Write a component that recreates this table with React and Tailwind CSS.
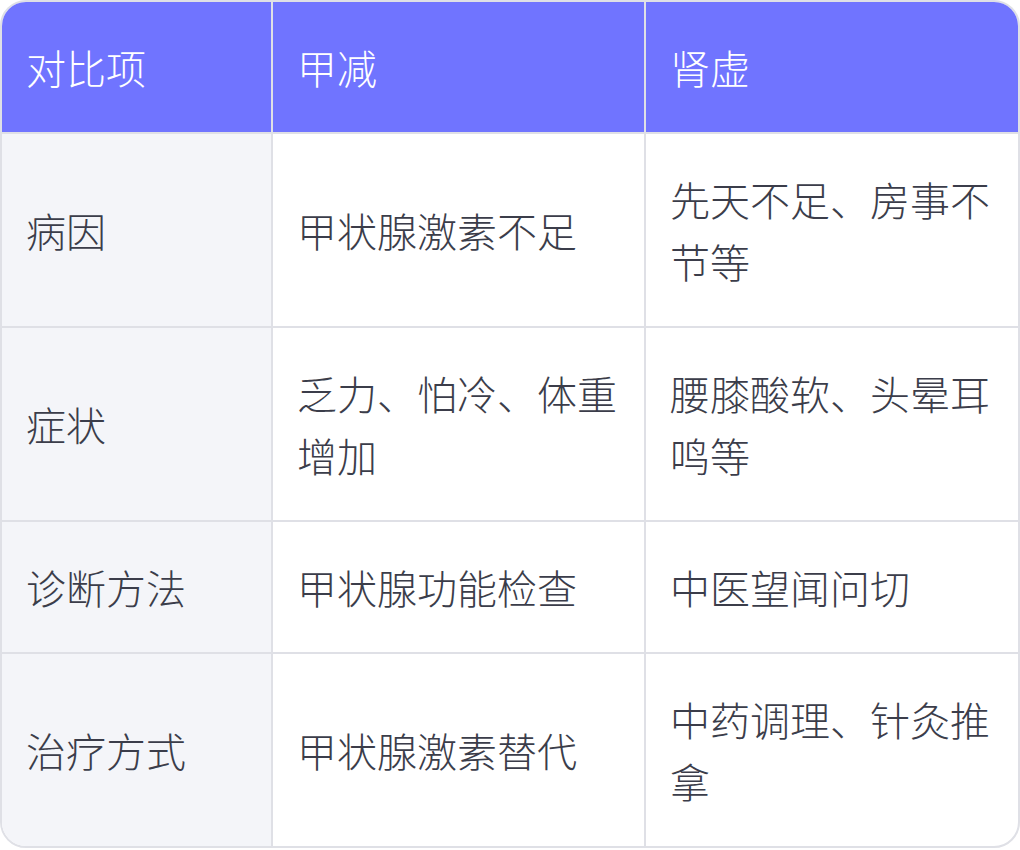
import React from 'react';

const rows = [
  { label: '病因', a: '甲状腺激素不足', b: '先天不足、房事不节等' },
  { label: '症状', a: '乏力、怕冷、体重增加', b: '腰膝酸软、头晕耳鸣等' },
  { label: '诊断方法', a: '甲状腺功能检查', b: '中医望闻问切' },
  { label: '治疗方式', a: '甲状腺激素替代', b: '中药调理、针灸推拿' },
];

const font = { fontFamily: '"Noto Sans CJK SC", "Noto Sans", sans-serif' };

export default function App() {
  return (
    <div className="w-[1020px] h-[850px] bg-white" style={font}>
      <div className="border-2 border-[#dfe0e6] rounded-[26px] overflow-hidden">
        <div className="grid grid-cols-[271px_373px_1fr] text-[40px] leading-[62px] font-light text-[#3b3d4a]">
          {/* header */}
          <div className="bg-[#7074ff] text-white px-6 py-[34px] border-r-2 border-b-2 border-[#dfe0e6]">对比项</div>
          <div className="bg-[#7074ff] text-white px-6 py-[34px] border-r-2 border-b-2 border-[#dfe0e6]">甲减</div>
          <div className="bg-[#7074ff] text-white px-6 py-[34px] border-b-2 border-[#dfe0e6]">肾虚</div>

          {rows.map((r, i) => {
            const last = i === rows.length - 1;
            return (
              <React.Fragment key={r.label}>
                <div className={`bg-[#f4f5f9] px-6 py-[34px] border-r-2 border-[#dfe0e6] flex items-center ${last ? '' : 'border-b-2'}`}>
                  {r.label}
                </div>
                <div className={`px-6 py-[34px] border-r-2 border-[#dfe0e6] flex items-center ${last ? '' : 'border-b-2'}`}>
                  {r.a}
                </div>
                <div className={`px-6 py-[34px] border-[#dfe0e6] flex items-center ${last ? '' : 'border-b-2'}`}>
                  {r.b}
                </div>
              </React.Fragment>
            );
          })}
        </div>
      </div>
    </div>
  );
}
